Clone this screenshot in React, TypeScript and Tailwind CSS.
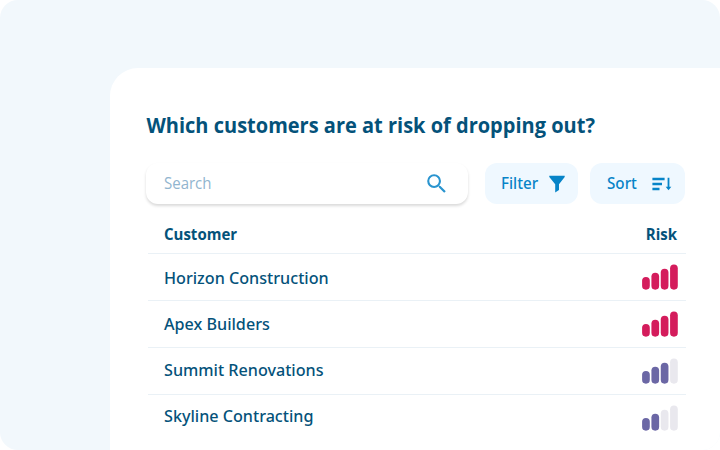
import clsx from "clsx";
import { MdSearch } from "react-icons/md";

const customers = [
  { name: "Horizon Construction", risk: 4, nudge: "pt-[2px]" },
  { name: "Apex Builders", risk: 4, nudge: "" },
  { name: "Summit Renovations", risk: 3, nudge: "pb-[2px]" },
  { name: "Skyline Contracting", risk: 2, nudge: "pb-[3px]" },
];

const barHeights = [12.8, 17, 21, 25.2];

function RiskBars({ level }: { level: number }) {
  const color = level === 4 ? "#d41c5c" : "#6b67a5";

  return (
    <svg width="36" height="26" viewBox="0 0 36 26">
      {barHeights.map((h, i) => (
        <rect
          key={h}
          x={0.1 + i * 9.33}
          y={25.7 - h}
          width="7.7"
          height={h}
          rx="3.85"
          fill={i < level ? color : "#e9e8ee"}
        />
      ))}
    </svg>
  );
}

function FilterIcon() {
  return (
    <svg width="16" height="18" viewBox="0 0 16 18" fill="#0784c8">
      <path d="M0.3 0.8H15.7V2L10 9.2V15L6.2 17.4V9.2L0.3 2Z" />
    </svg>
  );
}

function SortIcon() {
  return (
    <svg width="20" height="14" viewBox="0 0 20 14" fill="none" stroke="#0784c8" strokeWidth="2.3">
      <path d="M0.4 2H12.6M0.4 7H10M0.4 12H7.5" />
      <path d="M16.5 0.8V11.5" strokeWidth="1.8" />
      <path d="M13.7 9.8H19.3L16.5 13.2Z" fill="#0784c8" stroke="none" />
    </svg>
  );
}

export default function App() {
  return (
    <div className="w-[720px] h-[450px] overflow-hidden rounded-[18px] bg-[#f2f8fc] pl-[110px] pt-[68px] font-['Open_Sans',sans-serif] text-[#04527a]">
      <main className="h-full rounded-tl-[28px] bg-white pl-9 pt-[43.5px]">
        <h1 className="h-7 scale-y-[1.03] pl-[0.5px] text-[20px] leading-7 font-bold whitespace-nowrap">
          Which customers are at risk of dropping out?
        </h1>

        <div className="mt-[23.5px] flex h-[41px]">
          <div className="flex w-[322px] items-center justify-between rounded-[12px] bg-white pl-[18px] pr-[19px] shadow-[0_2px_3px_rgba(0,0,0,0.15)]">
            <span className="scale-y-[1.03] text-[15px] text-[#91b5cf]">Search</span>
            <MdSearch size={25.5} color="#2994cf" />
          </div>
          <button className="ml-[17px] flex w-[93px] items-center rounded-[12px] bg-[#eff8ff] pl-4 font-['Noto_Sans',sans-serif] text-[15.2px] font-medium text-[#0784c8]">
            <span className="w-12 scale-y-[1.02] pb-px text-left">Filter</span>
            <FilterIcon />
          </button>
          <button className="ml-3 flex w-[94.5px] items-center rounded-[12px] bg-[#eff8ff] pl-[17px] font-['Noto_Sans',sans-serif] text-[15.2px] font-medium text-[#0784c8]">
            <span className="w-[45px] scale-y-[1.02] pb-px text-left">Sort</span>
            <SortIcon />
          </button>
        </div>

        <div className="ml-[2px] w-[538px]">
          <div className="flex h-[50px] items-center justify-between border-b border-[#eaf1f6] pl-4 pr-[9px] pt-[11px] text-[15px] font-bold">
            <span className="scale-y-[1.03]">Customer</span>
            <span className="scale-y-[1.03]">Risk</span>
          </div>
          {customers.map((customer) => (
            <div
              key={customer.name}
              className="flex h-[47px] items-center justify-between border-b border-[#eaf1f6] pl-4 pr-2 font-['Noto_Sans',sans-serif] text-[16.15px] font-medium last:h-[46px] last:border-b-0"
            >
              <span className={clsx("block", customer.nudge)}>{customer.name}</span>
              <RiskBars level={customer.risk} />
            </div>
          ))}
        </div>
      </main>
    </div>
  );
}
